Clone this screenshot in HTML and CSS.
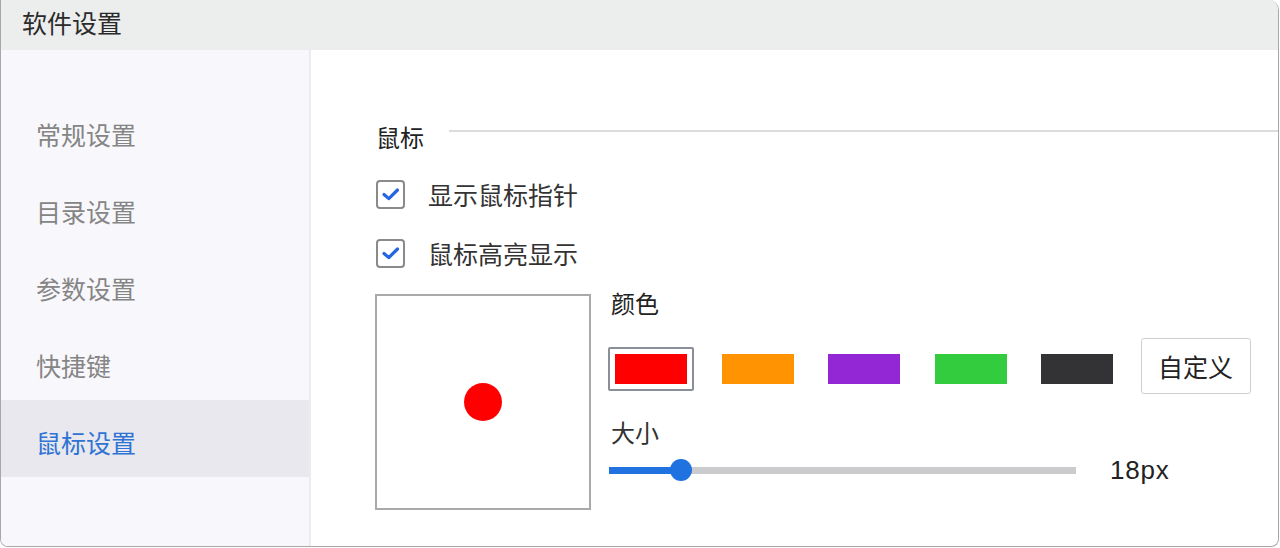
FILE: index.html
```html
<!DOCTYPE html>
<html>
<head>
<meta charset="utf-8">
<title>软件设置</title>
<link rel="stylesheet" href="styles.css">
</head>
<body>
<div class="window">
  <div class="titlebar">软件设置</div>
  <div class="main">
    <ul class="nav">
      <li>常规设置</li>
      <li>目录设置</li>
      <li>参数设置</li>
      <li>快捷键</li>
      <li class="active">鼠标设置</li>
    </ul>
    <div class="content">
      <div class="section-title"><span>鼠标</span><div class="rule"></div></div>
      <label class="check"><span class="box"><svg viewBox="0 0 22 22" width="22" height="22"><path d="M4 11.5 8.8 15.6 17.5 7" fill="none" stroke="#2566e0" stroke-width="3.2" stroke-linecap="round" stroke-linejoin="round"/></svg></span>显示鼠标指针</label>
      <label class="check second"><span class="box"><svg viewBox="0 0 22 22" width="22" height="22"><path d="M4 11.5 8.8 15.6 17.5 7" fill="none" stroke="#2566e0" stroke-width="3.2" stroke-linecap="round" stroke-linejoin="round"/></svg></span>鼠标高亮显示</label>
      <div class="highlight">
        <div class="preview"><div class="dot"></div></div>
        <div class="options">
          <div class="label">颜色</div>
          <div class="swatches">
            <div class="swatch selected"><span style="background:#ff0000"></span></div>
            <div class="swatch"><span style="background:#ff9302"></span></div>
            <div class="swatch"><span style="background:#9327d6"></span></div>
            <div class="swatch"><span style="background:#33cc3f"></span></div>
            <div class="swatch"><span style="background:#333235"></span></div>
            <button class="custom">自定义</button>
          </div>
          <div class="label size-label">大小</div>
          <div class="slider-row">
            <div class="slider"><div class="fill" style="width:72px"></div><div class="thumb" style="left:72px"></div></div>
            <span class="value">18px</span>
          </div>
        </div>
      </div>
    </div>
  </div>
</div>
</body>
</html>
```
FILE: styles.css
```css
html,body{
	margin:0;
	padding:0;
	background:#fff;
}
body{
	font-family:"Noto Sans CJK SC","Liberation Sans",sans-serif;
	color:#333;
}
.window{
	width:1279px;
	height:547px;
	box-sizing:border-box;
	border:1px solid #a8a8a8;
	border-top:0;
	border-radius:0 10px 8px 8px;
	overflow:hidden;
	display:flex;
	flex-direction:column;
}
.titlebar{
	height:50px;
	background:#eceded;
	font-size:25px;
	line-height:44px;
	padding-left:21px;
	color:#2a2a2a;
}
.main{
	flex:1;
	display:flex;
}
.nav{
	list-style:none;
	margin:0;
	padding:42px 0 0;
	width:308px;
	background:#f8f8fc;
	border-right:2px solid #ececf0;
}
.nav li{
	height:77px;
	box-sizing:border-box;
	padding:7px 0 0 35px;
	line-height:70px;
	font-size:25px;
	color:#858585;
}
.nav li.active{
	background:#e8e8ee;
	color:#2f73d4;
}
.content{
	flex:1;
	padding:69px 0 0 65px;
}
.section-title{
	display:flex;
	align-items:center;
	font-size:24px;
	color:#222;
	height:34px;
}
.section-title .rule{
	flex:1;
	height:2px;
	background:#dcdcdc;
	margin:-10px 0 0 25px;
}
.check{
	display:flex;
	align-items:center;
	font-size:25px;
	color:#333;
	margin-top:18px;
	height:46px;
}
.check.second{
	margin-top:13px;
}
.box{
	width:25px;
	height:25px;
	border:2px solid #8a8a8a;
	border-radius:4px;
	display:flex;
	align-items:center;
	justify-content:center;
	margin-right:23px;
	background:#fff;
}
.highlight{
	display:flex;
	margin-top:18px;
	margin-left:-1px;
}
.preview{
	width:212px;
	height:212px;
	border:2px solid #a9a9a9;
	display:flex;
	align-items:center;
	justify-content:center;
}
.dot{
	width:38px;
	height:38px;
	border-radius:50%;
	background:#ff0000;
}
.options{
	padding-left:17px;
}
.label{
	font-size:24px;
	color:#222;
	line-height:30px;
	padding-left:3px;
	margin-top:-6px;
}
.swatches{
	display:flex;
	align-items:center;
	gap:20.5px;
	margin-top:26px;
}
.swatch{
	width:86px;
	height:44px;
	box-sizing:border-box;
	border:2px solid transparent;
	padding:5px;
}
.swatch.selected{
	border-color:#8a8e98;
	border-radius:2px;
}
.swatch span{
	display:block;
	height:30px;
}
.custom{
	font-family:inherit;
	font-size:25px;
	color:#222;
	background:#fff;
	border:1.5px solid #cfcfcf;
	border-radius:3px;
	width:110px;
	height:56px;
	margin-top:-6px;
}
.size-label{
	margin-top:23px;
	color:#333;
}
.slider-row{
	display:flex;
	align-items:center;
	margin-top:8px;
	height:30px;
}
.slider{
	position:relative;
	width:467px;
	height:7px;
	background:#cbcacd;
	margin-left:1px;
}
.slider .fill{
	height:100%;
	background:#1f72e0;
}
.slider .thumb{
	position:absolute;
	top:50%;
	width:22px;
	height:22px;
	margin:-11px 0 0 -11px;
	border-radius:50%;
	background:#1f72e0;
}
.value{
	font-family:"Liberation Sans",sans-serif;
	font-size:26px;
	letter-spacing:0.8px;
	color:#222;
	margin-left:34px;
}
```
